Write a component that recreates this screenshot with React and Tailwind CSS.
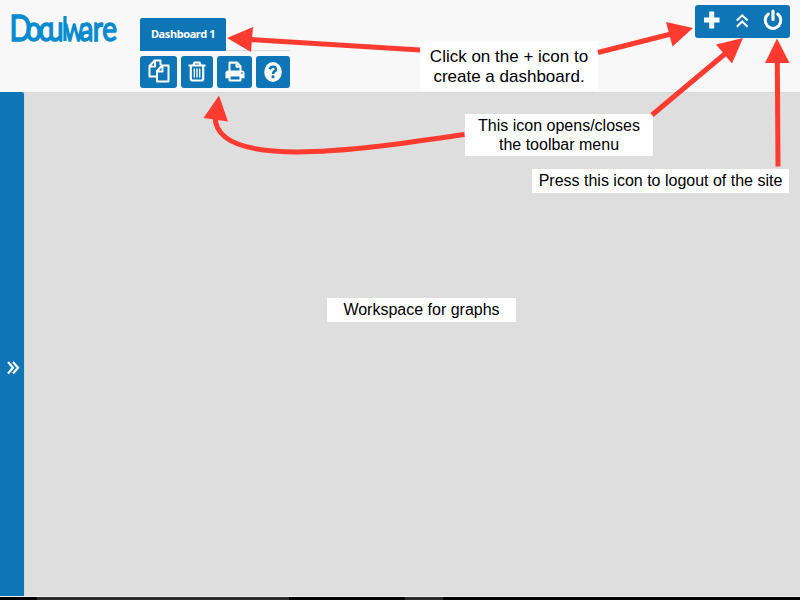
import React from "react";

function Logo() {
  return (
    <svg className="mt-[8px] ml-[6px] h-[42px] w-[118px] shrink-0" viewBox="6 8 118 42" role="img">
      <g fill="#078bd0" stroke="#078bd0" strokeWidth="1.500">
        <text transform="translate(0 41) scale(.8 1)" fontSize="35" fontFamily="Lato, sans-serif">
          <tspan x="11.800" fontSize="36">D</tspan>
          <tspan x="32.200">o</tspan>
          <tspan x="48">c</tspan>
          <tspan x="60">u</tspan>
          <tspan x="80.500" fontSize="23">W</tspan>
          <tspan x="99.500">a</tspan>
          <tspan x="116">r</tspan>
          <tspan x="127.800">e</tspan>
        </text>
        <path d="M65 16V41" strokeWidth="3.200" />
      </g>
    </svg>
  );
}

function CopyIcon() {
  return (
    <svg className="mb-[2px] h-[24px] w-[22px]" viewBox="0 0 22 24" fill="none" stroke="white" strokeWidth="2" strokeLinejoin="round">
      <path d="M8.500 17.500H1.500V7L6.500 1.500H12.500V6M1.500 7.500H7V1.500" />
      <path d="M14 6.500H20.500V22.500H9V12L14 6.500ZM9 12.500H14.500V6.500" />
    </svg>
  );
}

function TrashIcon() {
  return (
    <svg className="mb-px h-[21px] w-[18px]" viewBox="0 0 18 21" fill="none" stroke="white" strokeWidth="2.200" strokeLinejoin="round">
      <path d="M.5 4.500H17.500M5.500 4L6.500 1.500H11.500L12.500 4M2.800 5V17.500Q2.800 19.500 4.500 19.500H13.500Q15.200 19.500 15.200 17.500V5" />
      <path d="M6.300 7.500V16.500M9 7.500V16.500M11.700 7.500V16.500" strokeWidth="1.400" />
    </svg>
  );
}

function PrintIcon() {
  return (
    <svg className="mb-px h-[21px] w-[20px]" viewBox="0 0 20 20" preserveAspectRatio="none">
      <path d="M4.500 10V1.500H12L15.500 5V10M11.500 1.500V5.500H15.500" fill="none" stroke="white" strokeWidth="2" strokeLinejoin="round" />
      <path fill="white" fillRule="evenodd" d="M3 9H17Q19.500 9 19.500 11.500V16.500H16.500V18Q16.500 19.500 15 19.500H5Q3.500 19.500 3.500 18V16.500H.5V11.500Q.5 9 3 9ZM5.500 14.800V17.500H14.500V14.800ZM16.200 10.700V12.200H17.700V10.700Z" />
    </svg>
  );
}

function HelpIcon() {
  return (
    <svg className="mb-px h-[20px] w-[20px]" viewBox="0 0 20 20">
      <ellipse cx="10" cy="10" rx="8.800" ry="9.900" fill="white" />
      <path d="M6.700 7.200Q7.600 4.800 10.100 4.800Q13 4.800 13 7.300Q13 8.700 11.400 9.500Q10 10.200 10 11.900" fill="none" stroke="#0e76b7" strokeWidth="2.600" />
      <path d="M8.600 13.400H11.400V16.200H8.600Z" fill="#0e76b7" />
    </svg>
  );
}

function ToolButton({ width, children }) {
  return (
    <button className={`flex h-8 items-center justify-center rounded-[3px] bg-[#0e76b7] ${width}`}>
      {children}
    </button>
  );
}

function Note({ className, children }) {
  return (
    <div className={`absolute bg-white text-center font-['Liberation_Sans',Arial,sans-serif] whitespace-nowrap text-black ${className}`}>
      {children}
    </div>
  );
}

function Arrows() {
  return (
    <svg className="pointer-events-none absolute inset-0 h-[600px] w-[800px]" viewBox="0 0 800 600">
      <g fill="none" stroke="#ff3b2f" strokeWidth="5">
        <path d="M420 50L250 39.500" />
        <path d="M598 52.500L671 34" />
        <path d="M652 115L726 53" />
        <path d="M778 166.500L777.300 60" />
        <path d="M464.500 134.500C370 148 216 173 215 117" />
      </g>
      <g fill="#ff3b2f">
        <path d="M227 38L253 27L251 52Z" />
        <path d="M693 28L666 22L672.500 46.500Z" />
        <path d="M743 38L716 44.500L732 63.500Z" />
        <path d="M777 38.500L765 63H789.500Z" />
        <path d="M219 95.500L203.500 118L228 121.500Z" />
      </g>
    </svg>
  );
}

export default function App() {
  return (
    <div className="relative flex h-[600px] w-[800px] flex-col overflow-hidden bg-[#dedede]">
      <header className="flex h-[92px] shrink-0 items-start bg-[#f8f8f8]">
        <Logo />
        <div className="ml-4 w-[150px] pt-[18px]">
          <div className="flex h-[33px] border-b border-[#dadada]">
            <div className="flex h-[33px] w-[86px] shrink-0 items-center justify-center rounded-t-[2px] bg-[#0e76b7] font-['Noto_Sans',sans-serif] text-[11px] font-bold tracking-[-0.4px] whitespace-nowrap text-white">
              Dashboard 1
            </div>
          </div>
          <div className="mt-[5px] flex gap-1">
            <ToolButton width="w-[37px]"><CopyIcon /></ToolButton>
            <ToolButton width="w-[32px]"><TrashIcon /></ToolButton>
            <ToolButton width="w-[35px]"><PrintIcon /></ToolButton>
            <ToolButton width="w-[34px]"><HelpIcon /></ToolButton>
          </div>
        </div>
        <div className="mt-[5px] mr-[10px] ml-auto flex h-[33px] w-[95px] rounded-[3px] bg-[#0e76b7]">
          <svg className="h-[33px] w-[95px]" viewBox="695 5 95 33" fill="none" stroke="white">
            <path d="M704 20H719.500M711.700 11.500V28.500" strokeWidth="5" />
            <path d="M736.800 20.500L742.200 15.300L747.600 20.500M736.800 26.700L742.200 21.500L747.600 26.700" strokeWidth="2" />
            <path d="M768.300 14A7.800 8 0 1 0 777.700 14" strokeWidth="3" strokeLinecap="round" />
            <path d="M773 11V19.500" strokeWidth="3.200" strokeLinecap="round" />
          </svg>
        </div>
      </header>
      <main className="flex min-h-0 flex-1">
        <aside className="flex w-6 shrink-0 rounded-tr-[2px] bg-[#0e76b7] pt-[269px] pl-[7px]">
          <svg className="h-[14px] w-[13px]" viewBox="0 0 13 14" fill="none" stroke="white" strokeWidth="2.200">
            <path d="M1 1L6 6.700L1 12.400M6 1L11 6.700L6 12.400" />
          </svg>
        </aside>
        <section className="flex-1 border-t border-l border-t-[#d8d8d8] border-l-[#d0d8dc]" />
      </main>
      <footer className="flex h-[4px] shrink-0 border-t border-[#f0f0f0] bg-black">
        <div className="ml-[37px] w-[252px] bg-[#2c2b2e]" />
        <div className="ml-[116px] w-[38px] bg-[#2c2b2e]" />
      </footer>
      <Note className="top-[41px] left-[420px] h-[50px] w-[178px] pt-[6px] text-[17px] leading-[20px]">
        Click on the + icon to<br />create a dashboard.
      </Note>
      <Note className="top-[114px] left-[465px] h-[42px] w-[188px] pt-[2px] text-[16px] leading-[19px]">
        This icon opens/closes<br />the toolbar menu
      </Note>
      <Note className="top-[169px] left-[532px] h-6 w-[257px] text-[16px] leading-6">
        Press this icon to logout of the site
      </Note>
      <Note className="top-[298px] left-[327px] h-6 w-[189px] text-[16px] leading-6">
        Workspace for graphs
      </Note>
      <Arrows />
    </div>
  );
}
